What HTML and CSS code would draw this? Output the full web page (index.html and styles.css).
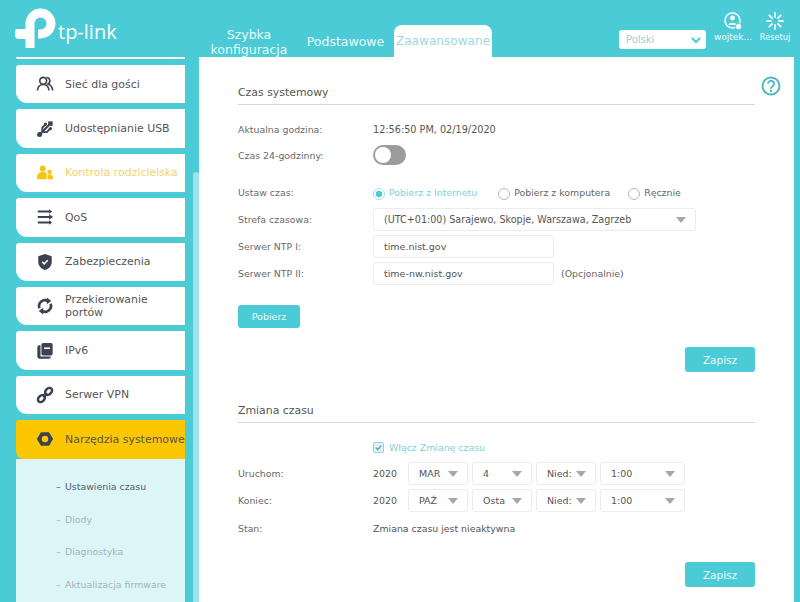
FILE: index.html
```html
<!DOCTYPE html>
<html lang="pl">
<head>
    <meta charset="UTF-8">
    <title>TP-Link - Czas systemowy</title>
    <link rel="stylesheet" href="styles.css">
</head>
<body>
    <header class="top">
        <div class="logo">
            <svg class="logo-mark" viewBox="0 0 42 42" width="42" height="42">
                <path d="M16 40V15.500A10.500 10.500 0 1 1 26.500 26H24" fill="none" stroke="#fff" stroke-width="9"/>
                <path d="M3 21H20V31H5Q1 31 1 27V23Q1 21 3 21Z" fill="#fff"/>
            </svg>
            <span class="logo-text">tp-link</span>
        </div>
        <nav class="tabs">
            <a class="tab tab-quick">Szybka konfiguracja</a>
            <a class="tab tab-basic">Podstawowe</a>
            <a class="tab tab-active">Zaawansowane</a>
        </nav>
        <div class="lang">
            <span>Polski</span>
            <svg viewBox="0 0 12 8" width="12" height="8"><path d="M2 2l4 4 4-4" fill="none" stroke="#4acbd6" stroke-width="2"/></svg>
        </div>
        <div class="top-action action-user">
            <svg viewBox="0 0 20 20" width="20" height="20">
                <circle cx="9.500" cy="9.500" r="7.500" fill="none" stroke="#fff" stroke-width="1.600"/>
                <circle cx="9.500" cy="7" r="2.400" fill="#fff"/>
                <path d="M5.500 14c.5-3 7.500-3 8 0z" fill="#fff"/>
                <circle cx="15.500" cy="15.500" r="3.200" fill="#fff" stroke="#4acbd6"/>
            </svg>
            <span>wojtek...</span>
        </div>
        <div class="top-action action-reset">
            <svg viewBox="0 0 20 20" width="20" height="20" stroke="#f2fdfd" stroke-width="1.800" stroke-linecap="round">
                <path d="M10 2v4M10 14v4M2 10h4M14 10h4M4.300 4.300l2.800 2.800M12.900 12.900l2.800 2.800M4.300 15.700l2.800-2.800M12.900 7.100l2.800-2.800"/>
            </svg>
            <span>Resetuj</span>
        </div>
    </header>

    <div class="layout">
        <aside class="sidebar">
            <div class="menu">
                <div class="menu-clip"></div>
                <a class="menu-item">
                    <svg class="icon" viewBox="0 0 20 20" fill="none" stroke="#3c4350" stroke-width="1.800">
                        <circle cx="8" cy="6.500" r="3.800"/><path d="M1.500 17c.5-4 2.500-6.500 6.500-6.500s6 2.500 6.500 6.500"/>
                        <path d="M11.500 2.800a3.800 3.800 0 0 1 1.800 7.200c2.800.8 4.700 3 5.200 7"/>
                    </svg>
                    <span>Sieć dla gości</span>
                </a>
                <a class="menu-item">
                    <svg class="icon" viewBox="0 0 20 20" fill="#3c4350">
                        <circle cx="4" cy="16" r="2.800"/>
                        <path d="M4 16L15 5" stroke="#3c4350" stroke-width="2.400"/>
                        <path d="M7 13V8.500L10.500 5" fill="none" stroke="#3c4350" stroke-width="2"/>
                        <path d="M7.500 13.500h4.500l3.500-3.500" fill="none" stroke="#3c4350" stroke-width="2"/>
                        <rect x="13.500" y="1.500" width="5" height="5"/><circle cx="10.500" cy="4.500" r="1.800"/><circle cx="16" cy="9.500" r="1.800"/>
                    </svg>
                    <span>Udostępnianie USB</span>
                </a>
                <a class="menu-item menu-parent">
                    <svg class="icon" viewBox="0 0 20 20" fill="#f5c518">
                        <circle cx="7.500" cy="5" r="3.400"/><path d="M1 15c0-4 2.500-6.500 6.500-6.500S12 10 12 13v4H2.500Q1 17 1 15z"/>
                        <circle cx="15" cy="9" r="2.500"/><path d="M13 17v-3c0-1.500 1-2.500 2.300-2.500s3.700 1 3.700 3.500v2z"/>
                    </svg>
                    <span>Kontrola rodzicielska</span>
                </a>
                <a class="menu-item">
                    <svg class="icon" viewBox="0 0 20 20" fill="none" stroke="#3c4350" stroke-width="2.200">
                        <path d="M2 4h14M2 10h14M2 16h14"/>
                        <path d="M14.500 7l4.500 3-4.500 3z" fill="#3c4350" stroke="none"/>
                        <path d="M14.500 1.500L18 4l-3.500 2.500z" fill="#3c4350" stroke="none"/>
                        <path d="M14.500 13.500L18 16l-3.500 2.500z" fill="#3c4350" stroke="none"/>
                    </svg>
                    <span>QoS</span>
                </a>
                <a class="menu-item">
                    <svg class="icon" viewBox="0 0 20 20">
                        <path d="M10 1l7.500 2.700v6.300c0 4.200-3 7.400-7.500 9-4.500-1.600-7.500-4.800-7.500-9V3.700z" fill="#3c4350"/>
                        <path d="M6.800 9.800l2.300 2.300 4-4" fill="none" stroke="#fff" stroke-width="1.700"/>
                    </svg>
                    <span>Zabezpieczenia</span>
                </a>
                <a class="menu-item">
                    <svg class="icon" viewBox="0 0 20 20" fill="none" stroke="#3c4350" stroke-width="3">
                        <path d="M3.800 12.500A6.500 6.500 0 0 1 13 4.500"/><path d="M16.200 7.500A6.500 6.500 0 0 1 7 15.500"/>
                        <path d="M12 0.500l5 4-5 3.500z" fill="#3c4350" stroke="none"/><path d="M8 12l-5 3.500 5 4z" fill="#3c4350" stroke="none"/>
                    </svg>
                    <span>Przekierowanie portów</span>
                </a>
                <a class="menu-item">
                    <svg class="icon" viewBox="0 0 20 20">
                        <path d="M5 3.500H3.500q-2 0-2 2v11q0 2 2 2h11q2 0 2-2V16H5z" fill="#3c4350"/>
                        <rect x="6" y="1" width="12.500" height="14" rx="2" fill="#3c4350"/>
                        <rect x="9" y="6" width="6.500" height="1.800" fill="#fff"/>
                    </svg>
                    <span>IPv6</span>
                </a>
                <a class="menu-item">
                    <svg class="icon" viewBox="0 0 20 20" fill="none" stroke="#3c4350" stroke-width="2.800">
                        <ellipse cx="6" cy="14" rx="4.400" ry="3.200" transform="rotate(-45 6 14)"/>
                        <ellipse cx="14" cy="6" rx="4.400" ry="3.200" transform="rotate(-45 14 6)"/>
                        <path d="M8 12l4-4"/>
                    </svg>
                    <span>Serwer VPN</span>
                </a>
                <a class="menu-item menu-open">
                    <svg class="icon" viewBox="0 0 20 20">
                        <path d="M5.500 2.500h9L19 10l-4.500 7.500h-9L1 10z" fill="#3c4350"/>
                        <circle cx="10" cy="10" r="3.600" fill="#fcc600"/>
                    </svg>
                    <span>Narzędzia systemowe</span>
                </a>
                <ul class="submenu">
                    <li class="sub-current">Ustawienia czasu</li>
                    <li>Diody</li>
                    <li>Diagnostyka</li>
                    <li>Aktualizacja firmware</li>
                </ul>
            </div>
            <div class="scrollbar"></div>
        </aside>

        <main class="content">
            <svg class="help" viewBox="0 0 20 20" width="20" height="20">
                <circle cx="10" cy="10" r="8.500" fill="none" stroke="#4fb9c4" stroke-width="2"/>
                <path d="M7 7.800a3 3 0 1 1 4.700 2.500c-1.100.7-1.700 1.200-1.700 2.400" fill="none" stroke="#4fb9c4" stroke-width="1.900"/>
                <circle cx="10" cy="15" r="1.200" fill="#4fb9c4"/>
            </svg>

            <section class="panel panel-time">
                <h2>Czas systemowy</h2>
                <div class="row row-first"><label>Aktualna godzina:</label><span class="value value-date">12:56:50 PM, 02/19/2020</span></div>
                <div class="row row-toggle"><label>Czas 24-godzinny:</label><span class="toggle"><i></i></span></div>
                <div class="row row-radio">
                    <label>Ustaw czas:</label>
                    <span class="radio radio-on">Pobierz z Internetu</span>
                    <span class="radio">Pobierz z komputera</span>
                    <span class="radio">Ręcznie</span>
                </div>
                <div class="row row-field"><label>Strefa czasowa:</label><span class="field select zone">(UTC+01:00) Sarajewo, Skopje, Warszawa, Zagrzeb</span></div>
                <div class="row row-field"><label>Serwer NTP I:</label><span class="field ntp">time.nist.gov</span></div>
                <div class="row row-field"><label>Serwer NTP II:</label><span class="field ntp">time-nw.nist.gov</span><span class="hint">(Opcjonalnie)</span></div>
                <button class="btn btn-get">Pobierz</button>
                <div class="actions"><button class="btn btn-save">Zapisz</button></div>
            </section>

            <section class="panel panel-dst">
                <h2>Zmiana czasu</h2>
                <div class="row row-check">
                    <label></label>
                    <span class="check"><svg viewBox="0 0 12 12" width="11" height="11"><rect x="0.500" y="0.500" width="11" height="11" rx="1.500" fill="#e3f3f5" stroke="#8fc9cf"/><path d="M3 6l2.200 2.300L9 3.800" fill="none" stroke="#4fa9b3" stroke-width="1.500"/></svg>Włącz Zmianę czasu</span>
                </div>
                <div class="row row-field">
                    <label>Uruchom:</label><span class="year">2020</span>
                    <span class="field select mini">MAR</span><span class="field select mini">4</span>
                    <span class="field select mini">Nied:</span><span class="field select hour">1:00</span>
                </div>
                <div class="row row-field">
                    <label>Koniec:</label><span class="year">2020</span>
                    <span class="field select mini">PAŹ</span><span class="field select mini">Osta</span>
                    <span class="field select mini">Nied:</span><span class="field select hour">1:00</span>
                </div>
                <div class="row row-state"><label>Stan:</label><span class="value">Zmiana czasu jest nieaktywna</span></div>
                <div class="actions actions-dst"><button class="btn btn-save">Zapisz</button></div>
            </section>
        </main>
    </div>
</body>
</html>
```

FILE: styles.css
```css
* {
    margin: 0;
    padding: 0;
    box-sizing: border-box;
}

body {
    width: 800px;
    height: 602px;
    overflow: hidden;
    background: #4acbd6;
    color: #555;
    font-family: "DejaVu Sans", Verdana, sans-serif;
    font-size: 9.400px;
}

/* top bar */
.top {
    display: flex;
    height: 57px;
}

.logo {
    display: flex;
    width: 199px;
    padding: 8px 0 0 14px;
}

.logo-text {
    margin: 11px 0 0 2px;
    color: #fff;
    font-family: "Open Sans", sans-serif;
    font-size: 20px;
    line-height: 26px;
}

.logo-mark {
    flex: none;
}

.tabs {
    display: flex;
    align-items: flex-end;
    width: 420px;
}

.tab {
    color: #eafbfc;
    font-size: 12.500px;
    line-height: 15px;
    text-align: center;
}

.tab-quick {
    width: 100px;
}

.tab-basic {
    width: 95px;
    padding: 0 2px 8px 0;
}

.tab-active {
    width: 98px;
    padding: 9px 0 8px;
    background: #fff;
    border-radius: 8px 8px 0 0;
    color: #9bd9de;
    font-size: 12.100px;
    white-space: nowrap;
}

.lang {
    display: flex;
    align-items: center;
    justify-content: space-between;
    width: 87px;
    height: 19px;
    margin-top: 30px;
    padding: 0 4px 0 7px;
    background: #fff;
    border-radius: 3px;
    color: #a8cdd1;
    font-size: 10px;
}

.top-action {
    display: flex;
    flex-direction: column;
    align-items: center;
    color: #f2fdfd;
    font-size: 9px;
    padding-top: 11px;
    white-space: nowrap;
}

.top-action span {
    line-height: 12px;
}

.action-user {
    width: 36px;
    margin-left: 9px;
}

.action-reset {
    width: 30px;
    margin-left: 9px;
    font-size: 8.200px;
}

/* left menu */
.layout {
    display: flex;
    height: 545px;
    overflow: hidden;
}

.sidebar {
    display: flex;
    width: 199px;
    flex: none;
}

.menu {
    width: 169px;
    margin-left: 16px;
    flex: none;
}

.menu-clip {
    height: 2px;
    margin-bottom: 6px;
    background: #fff;
    border-radius: 0 0 0 4px;
}

.menu-item {
    display: flex;
    align-items: center;
    height: 38.400px;
    margin-bottom: 6px;
    background: #fff;
    border-radius: 3px 0 0 11px;
    color: #555;
    font-size: 10.950px;
    line-height: 13px;
}

.menu-item span {
    width: 118px;
}

.icon {
    flex: none;
    width: 18px;
    height: 18px;
    margin: 0 11px 0 20px;
}

.menu-parent {
    color: #f3d36b;
}

.menu-open {
    margin-bottom: 0;
    background: #fcc600;
    border-radius: 3px 0 0 8px;
    color: #555;
}

.menu-open span {
    white-space: nowrap;
}

.submenu {
    height: 144px;
    padding: 12.500px 0 0 49px;
    background: #dcf5f7;
    list-style: none;
}

.submenu li {
    height: 32.600px;
    padding-top: 10px;
    color: #a4b4b8;
    font-size: 9.400px;
    white-space: nowrap;
}

.submenu li::before {
    content: "–";
    display: inline-block;
    width: 9px;
    margin-left: -9px;
}

.submenu .sub-current {
    color: #55606a;
}

.scrollbar {
    width: 5.500px;
    margin: 115px 0 0 8px;
    background: #9fe3e8;
    border-radius: 3px 3px 0 0;
}

/* main panel */
.content {
    position: relative;
    width: 595px;
    flex: none;
    padding: 0 39px;
    background: #fff;
}

.help {
    position: absolute;
    top: 19px;
    right: 13px;
}

.panel h2 {
    height: 20px;
    border-bottom: 1px solid #d8d8d8;
    color: #555;
    font-size: 10.900px;
    font-weight: normal;
    line-height: 16px;
}

.panel-time {
    padding-top: 28px;
}

.panel-dst {
    padding-top: 31px;
}

.row {
    display: flex;
    align-items: center;
}

.row label {
    width: 135px;
    flex: none;
    color: #6a6a6a;
}

.value-date {
    font-size: 9.700px;
}

.row-first {
    height: 14px;
    margin-top: 17px;
}

.row-toggle {
    height: 20px;
    margin-top: 9px;
}

.toggle {
    display: block;
    width: 33px;
    height: 20px;
    padding: 2px;
    background: #9c9c9c;
    border-radius: 10px;
}

.toggle i {
    display: block;
    width: 16px;
    height: 16px;
    background: #fff;
    border-radius: 50%;
}

.row-radio {
    height: 14px;
    margin-top: 20px;
    margin-bottom: 9px;
}

.radio {
    position: relative;
    margin-right: 18px;
    padding-left: 16px;
    color: #666;
}

.radio::before {
    content: "";
    position: absolute;
    left: 0;
    top: 1px;
    width: 10px;
    height: 10px;
    border: 1px solid #b9b9b9;
    border-radius: 50%;
}

.radio-on {
    margin-right: 21px;
    color: #7bd2d9;
}

.radio-on::before {
    border-color: #a5e0e5;
    background: radial-gradient(circle, #4acbd6 0 3px, #fff 3.500px);
}

.row-field {
    height: 23px;
    margin-bottom: 4px;
}

.field {
    display: flex;
    align-items: center;
    height: 23px;
    padding-left: 10px;
    border: 1px solid #ececec;
    border-radius: 3px;
    color: #555;
    font-size: 9.500px;
    white-space: nowrap;
}

.select {
    position: relative;
}

.select::after {
    content: "";
    position: absolute;
    top: 8px;
    right: 9px;
    border: 5px solid transparent;
    border-top: 6px solid #a6a6a6;
    border-bottom: 0;
}

.zone {
    width: 323px;
    font-size: 9.600px;
}

.ntp {
    width: 181px;
}

.hint {
    margin-left: 7px;
    color: #666;
}

.btn {
    display: block;
    border: none;
    border-radius: 3px;
    background: #4acbd6;
    color: #eafbfc;
    font-family: inherit;
}

.btn-get {
    width: 62px;
    height: 23px;
    margin-top: 20px;
    font-size: 9.500px;
}

.actions {
    display: flex;
    justify-content: flex-end;
    margin-top: 19px;
}

.btn-save {
    width: 70px;
    height: 25px;
    font-size: 10.500px;
}

.row-check {
    height: 14px;
    margin-top: 17px;
    margin-bottom: 8px;
}

.check {
    display: flex;
    align-items: center;
    gap: 5px;
    color: #7bd2d9;
}

.year {
    width: 35px;
    flex: none;
    color: #555;
}

.mini {
    width: 60px;
    margin-right: 4px;
}

.hour {
    width: 85px;
}

.row-state {
    height: 14px;
    margin-top: 9px;
}

.actions-dst {
    margin-top: 27px;
}
```
